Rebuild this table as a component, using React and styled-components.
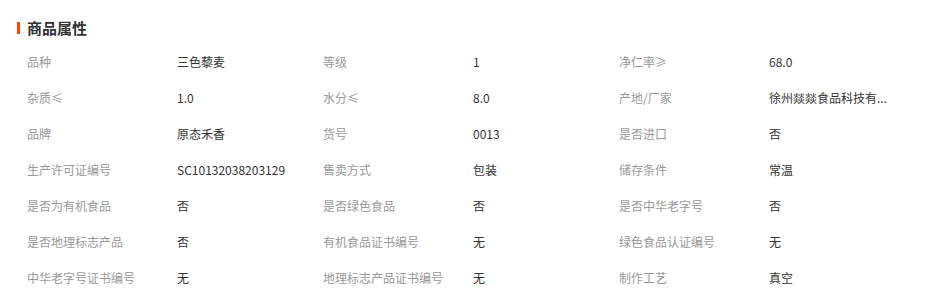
import React from "react";
import styled, { createGlobalStyle } from "styled-components";

const GlobalStyle = createGlobalStyle`
  body {
    margin: 0;
    background: #fff;
    font-family: "Noto Sans CJK SC", "Noto Sans", sans-serif;
  }
`;

const attrs = [
  ["品种", "三色藜麦"], ["等级", "1"], ["净仁率≥", "68.0"],
  ["杂质≤", "1.0"], ["水分≤", "8.0"], ["产地/厂家", "徐州燚燚食品科技有..."],
  ["品牌", "原态禾香"], ["货号", "0013"], ["是否进口", "否"],
  ["生产许可证编号", "SC10132038203129"], ["售卖方式", "包装"], ["储存条件", "常温"],
  ["是否为有机食品", "否"], ["是否绿色食品", "否"], ["是否中华老字号", "否"],
  ["是否地理标志产品", "否"], ["有机食品证书编号", "无"], ["绿色食品认证编号", "无"],
  ["中华老字号证书编号", "无"], ["地理标志产品证书编号", "无"], ["制作工艺", "真空"],
];

export default function App() {
  return (
    <>
      <GlobalStyle />
      <Section>
        <Title>商品属性</Title>
        <Grid>
          {attrs.map(([label, value]) => (
            <Cell key={label}>
              <Label>{label}</Label>
              <Value>{value}</Value>
            </Cell>
          ))}
        </Grid>
      </Section>
    </>
  );
}

const Section = styled.section`
  width: 939px;
  padding: 20px 0 0 17px;
  box-sizing: border-box;
`;

const Title = styled.h3`
  margin: 0;
  display: flex;
  align-items: center;
  height: 16px;
  font-size: 15px;
  font-weight: bold;
  color: #333;
  line-height: 16px;

  &::before {
    content: "";
    width: 3px;
    height: 12px;
    margin-right: 7px;
    background: #ff4400;
  }
`;

const Grid = styled.div`
  display: grid;
  grid-template-columns: repeat(3, 296px);
  padding: 7px 0 0 10px;
`;

const Cell = styled.div`
  display: flex;
  align-items: center;
  height: 36px;
  font-size: 12px;
`;

const Label = styled.span`
  width: 150px;
  flex-shrink: 0;
  color: #999;
  white-space: nowrap;
`;

const Value = styled.span`
  color: #333;
  white-space: nowrap;
`;
